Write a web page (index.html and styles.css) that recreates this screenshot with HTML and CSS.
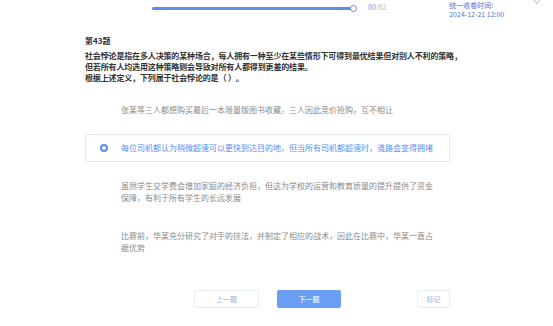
FILE: index.html
```html
<!DOCTYPE html>
<html>

<head>
    <link rel="stylesheet" href="styles.css">
</head>

<body>
    <div class="topbar">
        <div class="progress">
            <div class="progress-fill"></div>
            <span class="progress-dot"></span>
        </div>
        <div class="progress-count"><span class="done">80</span>/82</div>
        <div class="deadline">
            <div>统一收卷时间:</div>
            <div>2024-12-21 12:00</div>
        </div>
        <svg class="corner-icon" width="8" height="6" viewBox="0 0 8 6">
            <path d="M1 0 L4 4 L7 0" fill="none" stroke="#b9bec6" stroke-width="1"/>
        </svg>
    </div>

    <div class="paper">
        <div class="q-no">第43题</div>
        <div class="q-stem">
            <div>社会悖论是指在多人决策的某种场合，每人拥有一种至少在某些情形下可得到最优结果但对别人不利的策略，</div>
            <div>但若所有人均选用这种策略则会导致对所有人都得到更差的结果。</div>
            <div>根据上述定义，下列属于社会悖论的是（ ）。</div>
        </div>

        <div class="options">
            <div class="option">
                <span class="radio"></span>
                <span class="option-text">张某等三人都想购买最后一本限量版图书收藏，三人因此竞价抢购，互不相让</span>
            </div>
            <div class="option selected">
                <span class="radio"></span>
                <span class="option-text">每位司机都认为稍微超速可以更快到达目的地，但当所有司机都超速时，道路会变得拥堵</span>
            </div>
            <div class="option">
                <span class="radio"></span>
                <span class="option-text">虽然学生交学费会增加家庭的经济负担，但这为学校的运营和教育质量的提升提供了资金保障，有利于所有学生的长远发展</span>
            </div>
            <div class="option">
                <span class="radio"></span>
                <span class="option-text">比赛前，华某充分研究了对手的技法，并制定了相应的战术，因此在比赛中，华某一直占据优势</span>
            </div>
        </div>

        <div class="actions">
            <button class="btn btn-prev">上一题</button>
            <button class="btn btn-next">下一题</button>
            <button class="btn btn-mark">标记</button>
        </div>
    </div>
</body>

</html>
```

FILE: styles.css
```css
body {
    margin: 0;
    background-color: #fff;
    font-family: "Noto Sans CJK SC", "Noto Sans", sans-serif;
    font-size: 8px;
    color: #333;
}

/* top bar with progress and deadline */
.topbar {
    display: flex;
    align-items: flex-start;
    height: 20px;
    padding-left: 152px;
}

.progress {
    position: relative;
    width: 202px;
    height: 3px;
    margin-top: 7px;
    background-color: #e6eefb;
    border-radius: 2px;
}

.progress-fill {
    width: 100%;
    height: 100%;
    background-color: #5b8ee6;
    border-radius: 2px;
}

.progress-dot {
    position: absolute;
    right: -3px;
    top: -2px;
    width: 5px;
    height: 5px;
    border: 1px solid #5b8ee6;
    border-radius: 50%;
    background-color: #fff;
}

.progress-count {
    margin-left: 14px;
    margin-top: 3px;
    font-size: 8px;
    line-height: 10px;
    color: #b4b9c2;
    font-family: "Liberation Serif", serif;
}

.progress-count .done {
    color: #7aa3ea;
}

.deadline {
    margin-left: 63px;
    margin-top: 1px;
    font-size: 7px;
    line-height: 9px;
    color: #5a6fd6;
    white-space: nowrap;
}

.corner-icon {
    margin-left: auto;
    margin-right: 12px;
}

/* question paper */
.paper {
    width: 365px;
    margin-left: 85px;
    margin-top: 15px;
}

.q-no {
    font-weight: bold;
    line-height: 11px;
    margin-bottom: 4px;
}

.q-stem {
    font-weight: bold;
    line-height: 11px;
    white-space: nowrap;
    letter-spacing: -0.15px;
}

.options {
    margin-top: 13px;
}

.option {
    display: flex;
    align-items: center;
    padding: 7px 12px 7px 14px;
    margin-bottom: 10px;
    border: 1px solid transparent;
    border-radius: 2px;
    color: #8a8a8a;
    line-height: 12px;
}

.option .radio {
    flex: none;
    width: 4px;
    height: 4px;
    margin-right: 13px;
    border: 2px solid transparent;
    border-radius: 50%;
}

.option.selected {
    border-color: #dce9f8;
    color: #5b8def;
}

.option.selected .radio {
    border-color: #5b8def;
}

.actions {
    display: flex;
    align-items: center;
    margin-top: 28px;
    padding-left: 109px;
}

.btn {
    height: 18px;
    border: 1px solid #e4edf8;
    border-radius: 2px;
    background-color: #fff;
    font-family: "Noto Sans CJK SC", sans-serif;
    font-size: 7px;
    color: #9db4d6;
    cursor: pointer;
    padding: 0;
}

.btn-prev {
    width: 65px;
}

.btn-next {
    width: 64px;
    margin-left: 18px;
    border-color: #6a9ef5;
    background-color: #6a9ef5;
    color: #fff;
}

.btn-mark {
    width: 33px;
    margin-left: auto;
}
```
